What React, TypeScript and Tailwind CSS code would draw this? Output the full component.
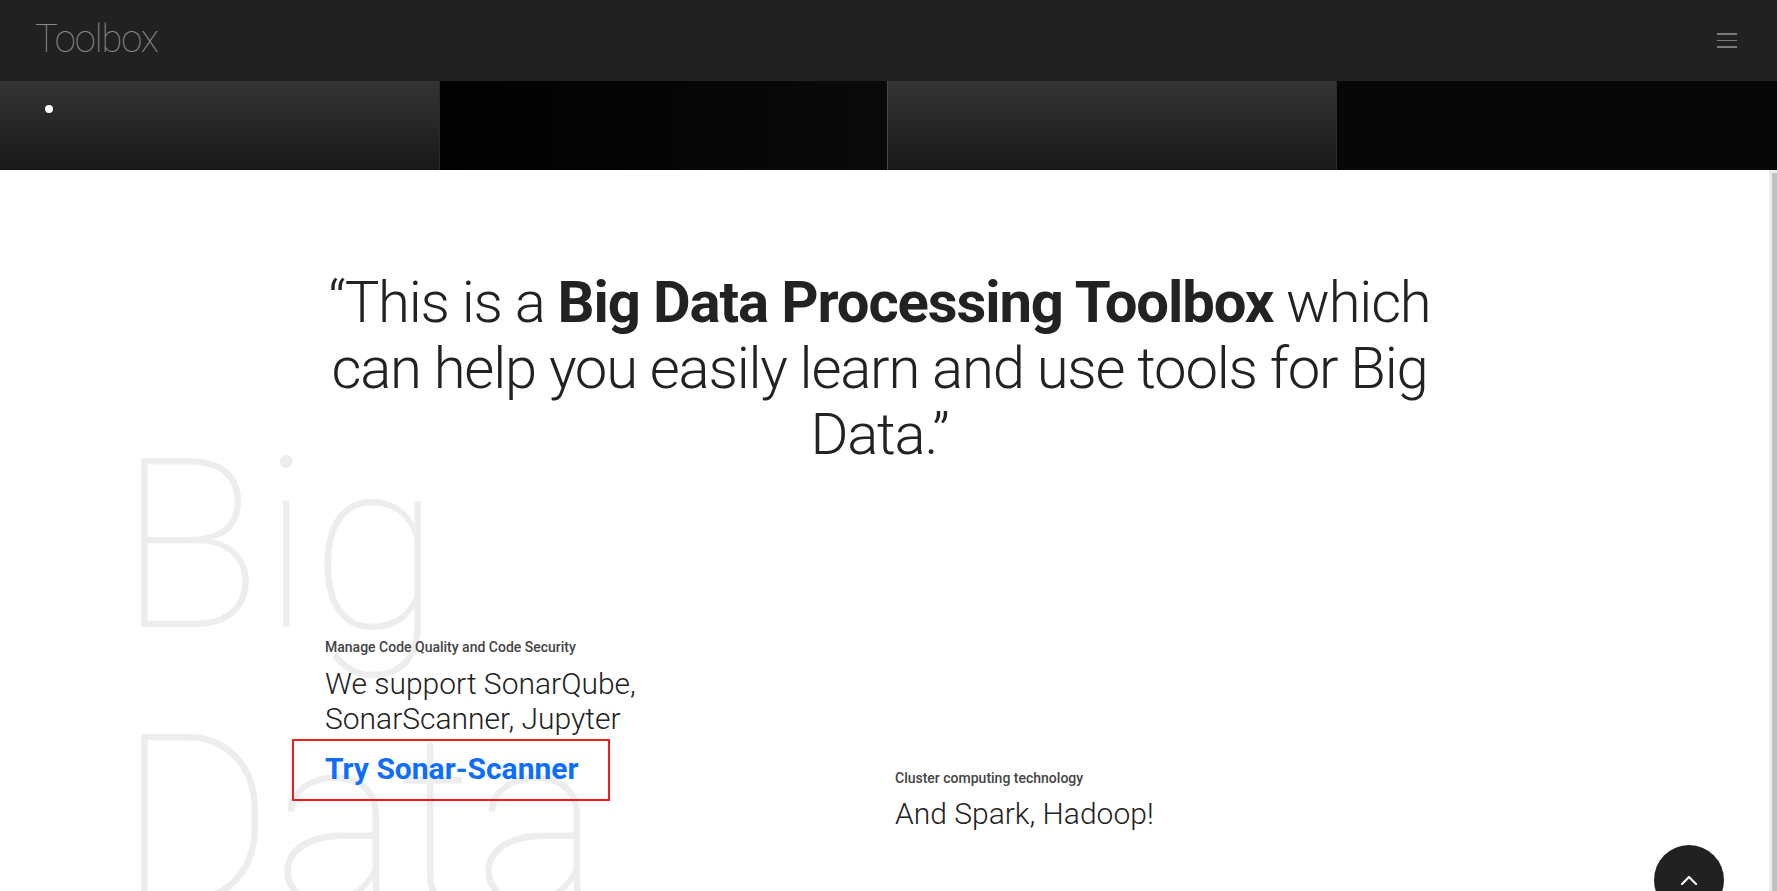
import React from "react";

export default function App() {
  return (
    <div className="relative flex h-screen w-full flex-col overflow-hidden bg-white font-[Roboto,sans-serif]">
      {/* Header */}
      <header className="flex h-[81px] shrink-0 items-center justify-between bg-[#212121] pl-[35px] pr-[40px]">
        <span className="mb-[4px] text-[38px] leading-[40px] font-thin tracking-[-1px] text-[#8a8a8a]">Toolbox</span>
        <div className="flex flex-col gap-[5px]">
          <span className="block h-[1.5px] w-[20px] bg-[#7a7a7a]" />
          <span className="block h-[1.5px] w-[20px] bg-[#7a7a7a]" />
          <span className="block h-[1.5px] w-[20px] bg-[#7a7a7a]" />
        </div>
      </header>

      {/* Carousel strip */}
      <div className="flex h-[89px] shrink-0">
        <div className="w-[439px] bg-gradient-to-b from-[#343434] to-[#191919]">
          <div className="ml-[45px] mt-[24px] h-[8px] w-[8px] rounded-full bg-white" />
        </div>
        <div className="w-[448px] border-l border-[#2a2a2a] bg-gradient-to-r from-[#020202] to-[#0a0a0a]" />
        <div className="w-[449px] border-l border-[#464646] bg-gradient-to-b from-[#343434] to-[#191919]" />
        <div className="flex-1 border-l border-[#2a2a2a] bg-[#070707]" />
      </div>

      {/* Main area with scrollbar */}
      <div className="flex min-h-0 flex-1">
        <main className="relative min-w-0 flex-1 overflow-hidden">
          {/* Background big text */}
          <div className="pointer-events-none absolute left-[118px] top-[238px] z-0 select-none text-[238px] leading-[276px] font-thin text-[#ededed]">
            <div>Big</div>
            <div>Data</div>
          </div>

          {/* Quote */}
          <div className="relative z-10 flex justify-center pr-[10px] pt-[99px]">
            <p className="w-[1130px] text-center text-[58px] leading-[66px] font-light tracking-[-1.2px] text-[#222]">
              “This is a <span className="font-bold tracking-[-1.1px]">Big Data Processing Toolbox</span> which can help you easily learn and use tools for Big Data.”
            </p>
          </div>

          {/* Cards */}
          <div className="relative z-10 mt-[170px] flex items-start pl-[325px]">
            <div className="w-[340px]">
              <div className="text-[14px] leading-[20px] font-medium text-[#444]">Manage Code Quality and Code Security</div>
              <div className="mt-[9px] text-[30px] leading-[35px] font-light text-[#222]">
                We support SonarQube, SonarScanner, Jupyter
              </div>
              <div className="ml-[-33px] mt-[3px] h-[62px] w-[318px] border-2 border-[#f01b1b] pl-[31px] pt-[10px]">
                <a href="#" className="text-[30px] leading-[35px] font-bold text-[#0d6efd]">
                  Try Sonar-Scanner
                </a>
              </div>
            </div>
            <div className="ml-[230px] mt-[131px] w-[400px]">
              <div className="text-[14px] leading-[20px] font-medium text-[#444]">Cluster computing technology</div>
              <div className="mt-[8px] text-[30px] leading-[35px] font-light text-[#222]">And Spark, Hadoop!</div>
            </div>
          </div>
        </main>

        {/* Scrollbar */}
        <div className="flex w-[8px] shrink-0 bg-[#ededed] pl-[3px] pt-[3px]">
          <div className="flex-1 bg-[#c1c1c1]" />
        </div>
      </div>

      {/* Back to top */}
      <button className="absolute right-[53px] top-[845px] z-20 flex h-[70px] w-[70px] items-start justify-center rounded-full bg-[#212121] pt-[30px]">
        <svg width="18" height="10" viewBox="0 0 18 10" fill="none">
          <path d="M2 9 L9 2 L16 9" stroke="white" strokeWidth="2.2" strokeLinecap="round" strokeLinejoin="round" />
        </svg>
      </button>
    </div>
  );
}
